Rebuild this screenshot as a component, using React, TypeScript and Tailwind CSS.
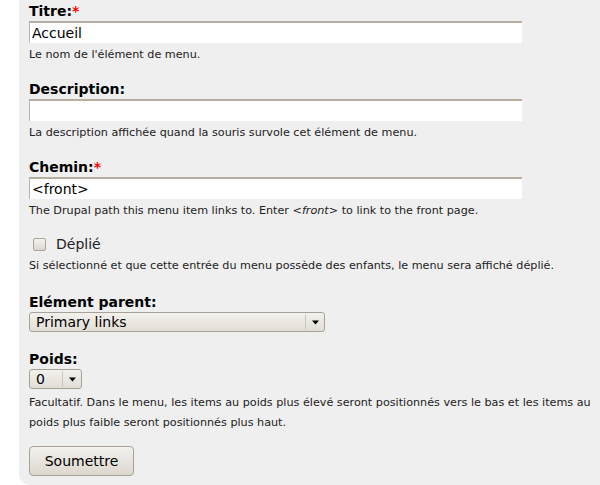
import type { ReactNode } from "react";

const font = "font-['DejaVu_Sans','Liberation_Sans',sans-serif]";

function Label({ children, required }: { children: ReactNode; required?: boolean }) {
    return (
        <label className="block text-[14px] font-bold leading-[16px] text-black">
            {children}
            {required && <span className="text-[#ff0000]">*</span>}
        </label>
    );
}

function Help({ children, className = "" }: { children: ReactNode; className?: string }) {
    return <div className={"text-[11.2px] leading-[16px] text-[#222] " + className}>{children}</div>;
}

function TextInput({ value }: { value?: string }) {
    return (
        <div className="mt-[2px] flex h-[22px] w-[493px] items-center border-l border-t-2 border-l-[#b9b3a9] border-t-[#b6aea1] bg-white pl-[2px] text-[14px] text-black">
            {value}
        </div>
    );
}

function Arrow() {
    return (
        <svg width="7" height="5" viewBox="0 0 7 5" className="block">
            <path d="M0 0.5 L7 0.5 L3.5 4.5 Z" fill="#000" />
        </svg>
    );
}

function Select({ value, width }: { value: string; width: string }) {
    return (
        <div
            className={
                "mt-[2px] flex h-[20px] items-center rounded-[3px] border border-[#a8a296] bg-gradient-to-b from-[#f3f1ed] to-[#e2ded6] text-[14px] text-black " +
                width
            }
        >
            <span className="flex-1 pl-[6px] leading-[18px]">{value}</span>
            <span className="h-[16px] w-px bg-[#cdc8bf]" />
            <span className="flex w-[18px] justify-center">
                <Arrow />
            </span>
        </div>
    );
}

export default function App() {
    return (
        <div className={"h-[485px] w-[600px] overflow-hidden bg-white " + font}>
            <div className="ml-[19px] h-[485px] rounded-bl-[10px] bg-[#efefef] pl-[10px] pt-[3px]">
                <div className="mb-[18px]">
                    <Label required>Titre:</Label>
                    <TextInput value="Accueil" />
                    <Help className="mt-[4px]">Le nom de l'élément de menu.</Help>
                </div>
                <div className="mb-[18px]">
                    <Label>Description:</Label>
                    <TextInput />
                    <Help className="mt-[4px]">La description affichée quand la souris survole cet élément de menu.</Help>
                </div>
                <div>
                    <Label required>Chemin:</Label>
                    <TextInput value="<front>" />
                    <Help className="mt-[4px]">
                        The Drupal path this menu item links to. Enter <em>&lt;front&gt;</em> to link to the front page.
                    </Help>
                </div>

                <div className="mt-[17px] flex h-[16px] items-center">
                    <span className="ml-[4px] h-[13px] w-[13px] rounded-[2px] border border-[#aaa59c] bg-gradient-to-b from-[#f4f2ee] to-[#dcd8d0]" />
                    <span className="ml-[10px] text-[14px] text-[#222]">Déplié</span>
                </div>
                <Help className="mt-[6px]">
                    Si sélectionné et que cette entrée du menu possède des enfants, le menu sera affiché déplié.
                </Help>

                <div className="mt-[20px]">
                    <Label>Elément parent:</Label>
                    <Select value="Primary links" width="w-[296px]" />
                </div>

                <div className="mt-[19px]">
                    <Label>Poids:</Label>
                    <Select value="0" width="w-[53px]" />
                </div>
                <div className="mt-[4px] text-[11.2px] leading-[20px] text-[#222]">
                    Facultatif. Dans le menu, les items au poids plus élevé seront positionnés vers le bas et les items au
                    poids plus faible seront positionnés plus haut.
                </div>

                <button className="mt-[13px] h-[30px] w-[105px] rounded-[4px] border border-[#a8a296] bg-gradient-to-b from-[#f3f1ed] to-[#dcd8cf] text-[14px] text-black">
                    Soumettre
                </button>
            </div>
        </div>
    );
}
